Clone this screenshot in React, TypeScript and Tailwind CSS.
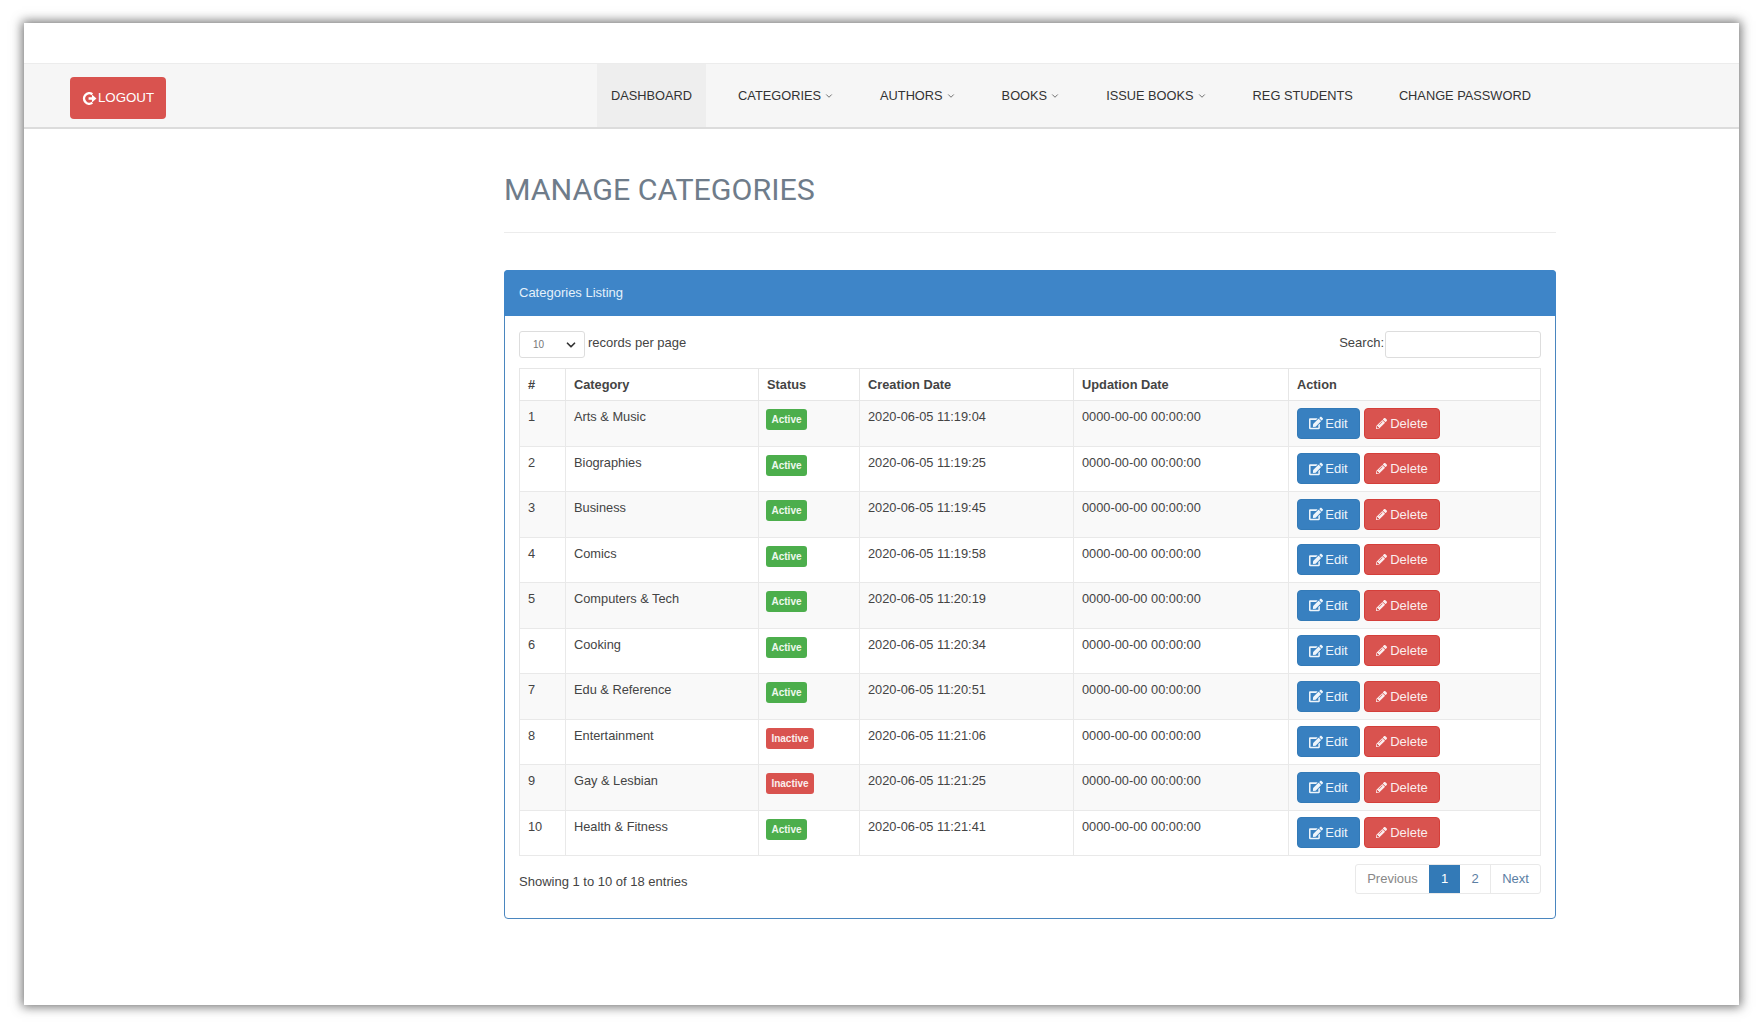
import { ChevronDown } from 'lucide-react'
import { FaEdit, FaPencilAlt } from 'react-icons/fa'

const rows = [
  { id: 1, name: 'Arts & Music', active: true, created: '2020-06-05 11:19:04' },
  { id: 2, name: 'Biographies', active: true, created: '2020-06-05 11:19:25' },
  { id: 3, name: 'Business', active: true, created: '2020-06-05 11:19:45' },
  { id: 4, name: 'Comics', active: true, created: '2020-06-05 11:19:58' },
  { id: 5, name: 'Computers & Tech', active: true, created: '2020-06-05 11:20:19' },
  { id: 6, name: 'Cooking', active: true, created: '2020-06-05 11:20:34' },
  { id: 7, name: 'Edu & Reference', active: true, created: '2020-06-05 11:20:51' },
  { id: 8, name: 'Entertainment', active: false, created: '2020-06-05 11:21:06' },
  { id: 9, name: 'Gay & Lesbian', active: false, created: '2020-06-05 11:21:25' },
  { id: 10, name: 'Health & Fitness', active: true, created: '2020-06-05 11:21:41' },
]

const navItems = [
  { label: 'DASHBOARD', current: true },
  { label: 'CATEGORIES', caret: true },
  { label: 'AUTHORS', caret: true },
  { label: 'BOOKS', caret: true },
  { label: 'ISSUE BOOKS', caret: true },
  { label: 'REG STUDENTS' },
  { label: 'CHANGE PASSWORD' },
]

function LogoutIcon() {
  return (
    <svg viewBox="0 0 16 16" className="w-[15px] h-[15px] mr-[1px]" fill="none">
      <path d="M11 3.4A5.6 5.6 0 1 0 11 12.6" stroke="white" strokeWidth="2.6" />
      <path d="M7 6.6h3.6V3.8L15.4 8l-4.8 4.2V9.4H7z" fill="white" />
    </svg>
  )
}

function NavBar() {
  return (
    <div className="h-[66px] bg-[#f6f6f6] border-t border-[#ececec] border-b-2 border-b-[#dcdcdc] flex items-stretch">
      <div className="ml-[46px] mt-[13px] w-[96px] h-[42px] rounded-[4px] bg-[#d9534f] flex items-center justify-center text-white text-[13.3px] leading-none">
        <LogoutIcon />
        LOGOUT
      </div>
      <nav className="ml-[431px] flex items-stretch gap-[18px]">
        {navItems.map((item) => (
          <div
            key={item.label}
            className={`px-[14px] flex items-center justify-center pt-[1px] text-[12.8px] text-[#333] ${item.current ? 'bg-[#eeeeee]' : ''}`}
          >
            {item.label}
            {item.caret && <ChevronDown className="w-[10px] h-[10px] ml-[3px] text-[#555]" />}
          </div>
        ))}
      </nav>
    </div>
  )
}

function Actions() {
  return (
    <div className="flex gap-[4px]">
      <div className="w-[63px] h-[31px] rounded-[4px] bg-[#3880c0] border border-[#337ab7] flex items-center justify-center text-[#eef5fb] text-[13px]">
        <FaEdit className="w-[14px] h-[14px] mr-[2px]" />
        Edit
      </div>
      <div className="w-[76px] h-[31px] rounded-[4px] bg-[#d9534f] border border-[#d43f3a] flex items-center justify-center text-[#fbeeee] text-[13px]">
        <FaPencilAlt className="w-[11px] h-[11px] mr-[3px]" />
        Delete
      </div>
    </div>
  )
}

function CategoriesTable() {
  return (
    <table className="w-[1021px] table-fixed border-collapse text-[12.8px] text-[#444]">
      <colgroup>
        <col className="w-[46px]" />
        <col className="w-[193px]" />
        <col className="w-[101px]" />
        <col className="w-[214px]" />
        <col className="w-[215px]" />
        <col className="w-[252px]" />
      </colgroup>
      <thead>
        <tr className="h-[32px] font-bold text-left">
          {['#', 'Category', 'Status', 'Creation Date', 'Updation Date', 'Action'].map((h) => (
            <th key={h} className="border border-[#e6e6e6] px-[8px] font-bold">
              {h}
            </th>
          ))}
        </tr>
      </thead>
      <tbody>
        {rows.map((row) => (
          <tr key={row.id} className={`h-[45.5px] ${row.id % 2 === 1 ? 'bg-[#f9f9f9]' : 'bg-white'}`}>
            <td className="border border-[#e9e9e9] px-[8px] pt-[6px] align-top">{row.id}</td>
            <td className="border border-[#e9e9e9] px-[8px] pt-[6px] align-top">{row.name}</td>
            <td className="border border-[#e9e9e9] px-[7px] pt-[8px] align-top">
              {row.active ? (
                <span className="block w-[41px] h-[21px] rounded-[3px] bg-[#4cae4c] text-[#eef8ee] text-[10px] font-bold leading-[21px] text-center">
                  Active
                </span>
              ) : (
                <span className="block w-[48px] h-[21px] rounded-[3px] bg-[#d9534f] text-[#fbeeee] text-[10px] font-bold leading-[21px] text-center">
                  Inactive
                </span>
              )}
            </td>
            <td className="border border-[#e9e9e9] px-[8px] pt-[6px] align-top">{row.created}</td>
            <td className="border border-[#e9e9e9] px-[8px] pt-[6px] align-top">0000-00-00 00:00:00</td>
            <td className="border border-[#e9e9e9] px-[8px] align-middle">
              <Actions />
            </td>
          </tr>
        ))}
      </tbody>
    </table>
  )
}

function Panel() {
  return (
    <div className="mt-[37px] w-[1052px] h-[649px] rounded-[4px] border border-[#4a86bf] bg-white">
      <div className="h-[46px] -mx-px -mt-px rounded-t-[4px] bg-[#3e85c8] flex items-center px-[15px] text-[13px] text-[#e4f1fb]">
        Categories Listing
      </div>
      <div className="px-[14px]">
        <div className="h-[52px] pt-[15px] flex items-start justify-between text-[13px] text-[#444]">
          <div className="flex items-center">
            <div className="w-[66px] h-[27px] rounded-[3px] border border-[#dddddd] flex items-center justify-between pl-[13px] pr-[6px] text-[10px] text-[#777]">
              10
              <ChevronDown className="w-[14px] h-[14px] text-[#333]" strokeWidth={3} />
            </div>
            <span className="ml-[3px] mb-[4px]">records per page</span>
          </div>
          <div className="flex items-center">
            <span className="mb-[4px]">Search:</span>
            <div className="ml-[1px] w-[156px] h-[27px] rounded-[3px] border border-[#dddddd]" />
          </div>
        </div>
        <CategoriesTable />
        <div className="mt-[8px] flex items-start justify-between">
          <span className="mt-[8px] text-[13px] text-[#444]">Showing 1 to 10 of 18 entries</span>
          <div className="flex h-[30px] text-[13px] border border-[#e9e9e9] rounded-[3px]">
            <div className="w-[73px] flex items-center justify-center text-[#888]">Previous</div>
            <div className="w-[31px] flex items-center justify-center bg-[#337ab7] text-white">1</div>
            <div className="w-[31px] flex items-center justify-center text-[#5b7ea3] border-r border-[#e9e9e9]">2</div>
            <div className="w-[49px] flex items-center justify-center text-[#5b7ea3]">Next</div>
          </div>
        </div>
      </div>
    </div>
  )
}

export default function App() {
  return (
    <div className="w-[1760px] h-[1027px] bg-white pt-[23px] pl-[24px] font-['Liberation_Sans',Arial,sans-serif]">
      <div className="w-[1715px] h-[982px] pt-[40px] bg-white shadow-[0_0_10px_2px_rgba(70,70,70,0.75)]">
        <NavBar />
        <div className="ml-[480px] w-[1052px]">
          <h1 className="pt-[43px] h-[104px] border-b border-[#ececec] font-['Roboto',sans-serif] text-[30.4px] leading-[36px] font-normal text-[#6f7c8a]">
            MANAGE CATEGORIES
          </h1>
          <Panel />
        </div>
      </div>
    </div>
  )
}
